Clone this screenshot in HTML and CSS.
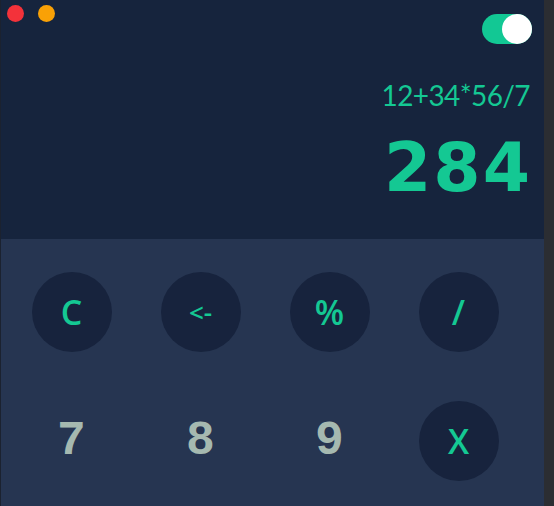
FILE: index.html
```html
<!DOCTYPE html>
<html lang="en">
<head>
<meta charset="utf-8">
<title>Calculator</title>
<link rel="stylesheet" href="styles.css">
</head>
<body>
<div class="app">
  <div class="display">
    <div class="topbar">
      <div class="lights">
        <span class="light red"></span>
        <span class="light orange"></span>
      </div>
      <div class="toggle"><span class="knob"></span></div>
    </div>
    <div class="expr">12+34*56/7</div>
    <div class="result">284</div>
  </div>
  <div class="keypad">
    <div class="cell"><span class="key op">C</span></div>
    <div class="cell"><span class="key op small">&lt;-</span></div>
    <div class="cell"><span class="key op">%</span></div>
    <div class="cell"><span class="key op">/</span></div>
    <div class="cell"><span class="key num">7</span></div>
    <div class="cell"><span class="key num">8</span></div>
    <div class="cell"><span class="key num">9</span></div>
    <div class="cell"><span class="key op">X</span></div>
  </div>
</div>
</body>
</html>
```

FILE: styles.css
```css
html, body {
  margin: 0;
  padding: 0;
  background: #2b2d32;
  width: 554px;
  height: 506px;
  overflow: hidden;
}

.app {
  width: 543px;
  height: 506px;
  border-left: 1px solid #1b2230;
  display: flex;
  flex-direction: column;
  font-family: "Open Sans", "DejaVu Sans", sans-serif;
}

.display {
  height: 239px;
  background: #16243d;
  display: flex;
  flex-direction: column;
  align-items: flex-end;
  padding-right: 14px;
  box-sizing: border-box;
}

.topbar {
  align-self: stretch;
  display: flex;
  justify-content: space-between;
  align-items: flex-start;
  height: 45px;
}

.lights {
  display: flex;
  gap: 14px;
  padding: 5px 0 0 6px;
}

.light {
  width: 17px;
  height: 17px;
  border-radius: 50%;
}

.red { background: #f3323a; }
.orange { background: #f9a106; }

.toggle {
  margin-top: 14px;
  margin-right: -2px;
  width: 50px;
  height: 30px;
  border-radius: 15px;
  background: #12c894;
  display: flex;
  justify-content: flex-end;
  align-items: center;
}

.knob {
  width: 30px;
  height: 30px;
  border-radius: 50%;
  background: #ffffff;
}

.expr {
  margin-top: 36px;
  font-family: "Lato", "Open Sans", sans-serif;
  font-weight: 400;
  font-size: 28px;
  line-height: 28px;
  color: #14c893;
  letter-spacing: -0.6px;
}

.result {
  margin-top: 25px;
  font-family: "DejaVu Sans", sans-serif;
  font-weight: bold;
  font-size: 68px;
  line-height: 68px;
  color: #14c893;
  letter-spacing: 2px;
  margin-right: -2px;
}

.keypad {
  flex: 1;
  background: #263551;
  display: grid;
  grid-template-columns: repeat(4, 129px);
  grid-auto-rows: 129px;
  padding: 8px 0 0 6px;
}

.cell {
  display: flex;
  justify-content: center;
  align-items: center;
}

.key {
  width: 80px;
  height: 80px;
  border-radius: 50%;
  display: flex;
  justify-content: center;
  align-items: center;
}

.op {
  background: #17233d;
  color: #14c893;
  font-size: 34px;
  font-weight: 600;
}

.small {
  font-size: 26px;
}

.num {
  color: #a5b9b0;
  font-family: "Liberation Mono", monospace;
  font-weight: bold;
  font-size: 48px;
}
```
